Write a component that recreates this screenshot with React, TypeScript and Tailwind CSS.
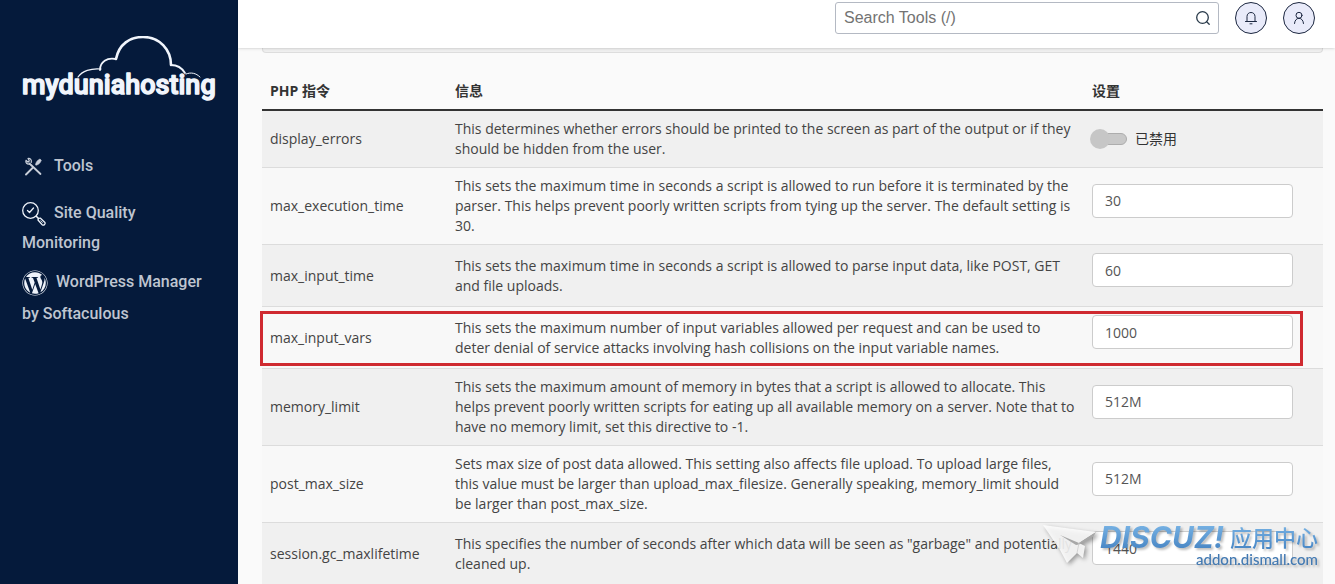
import { useState } from 'react';
import { FaWordpress } from 'react-icons/fa';

interface Directive {
  name: string;
  info: string;
  value?: string;
  marked?: boolean;
}

const directives: Directive[] = [
  {
    name: 'display_errors',
    info: 'This determines whether errors should be printed to the screen as part of the output or if they should be hidden from the user.',
  },
  {
    name: 'max_execution_time',
    info: 'This sets the maximum time in seconds a script is allowed to run before it is terminated by the parser. This helps prevent poorly written scripts from tying up the server. The default setting is 30.',
    value: '30',
  },
  {
    name: 'max_input_time',
    info: 'This sets the maximum time in seconds a script is allowed to parse input data, like POST, GET and file uploads.',
    value: '60',
  },
  {
    name: 'max_input_vars',
    info: 'This sets the maximum number of input variables allowed per request and can be used to deter denial of service attacks involving hash collisions on the input variable names.',
    value: '1000',
    marked: true,
  },
  {
    name: 'memory_limit',
    info: 'This sets the maximum amount of memory in bytes that a script is allowed to allocate. This helps prevent poorly written scripts for eating up all available memory on a server. Note that to have no memory limit, set this directive to -1.',
    value: '512M',
  },
  {
    name: 'post_max_size',
    info: 'Sets max size of post data allowed. This setting also affects file upload. To upload large files, this value must be larger than upload_max_filesize. Generally speaking, memory_limit should be larger than post_max_size.',
    value: '512M',
  },
  {
    name: 'session.gc_maxlifetime',
    info: 'This specifies the number of seconds after which data will be seen as "garbage" and potentially cleaned up.',
    value: '1440',
  },
];

// ─── Sidebar ─────────────────────────────────────────────────────────────────
function Logo() {
  return (
    <svg viewBox="0 0 194 70" className="block h-[70px] w-[194px]" role="img" aria-label="myduniahosting">
      <g fill="none" stroke="#f1f5fc" strokeLinecap="round" strokeLinejoin="round">
        <path d="M56 41c4-6 13-9 23-8" strokeWidth="1.2" />
        <path d="M78 34c0-8 7-13 16-11" strokeWidth="1.8" />
        <path d="M94 23C97 8 108 1 121 1c17 0 28 13 28 28" strokeWidth="2.6" />
        <path d="M149 29c6 0 11 3 14 8" strokeWidth="1.8" />
        <path d="M164 38c5-2 10-1 14 3" strokeWidth="1" />
      </g>
      <text
        x="0"
        y="58"
        fontSize="27"
        fill="#f1f5fc"
        stroke="#f1f5fc"
        strokeWidth="1.4"
        strokeLinejoin="round"
        className="font-['Roboto',sans-serif] font-medium"
      >
        myduniahosting
      </text>
    </svg>
  );
}

function ToolsIcon() {
  return (
    <svg viewBox="0 0 20 20" className="inline-block size-5 align-middle" fill="none" stroke="#c9cfda" strokeLinecap="round">
      <path d="M7.500 6.500 18.500 17" strokeWidth="1.800" />
      <path d="M6 1.500c2.300-.3 4 1.500 3.200 4M4 3.300c-.8 2.500 1 4.200 3.500 3.800M6 1.500l1.300 2.300-1.300 1.300L4 3.300" strokeWidth="1.200" />
      <path d="M4 17.500 11 10.500" strokeWidth="1.900" />
      <path d="M13.500 7.500c.5-2.500 2-4.500 4.500-5.500l1.300 1.200c-.8 2.500-2.500 4.300-5 5z" fill="#c9cfda" strokeWidth=".6" />
    </svg>
  );
}

function QualityIcon() {
  return (
    <svg viewBox="0 0 24 24" className="inline-block size-6 align-middle" fill="none" stroke="#eef2f9" strokeLinecap="round" strokeLinejoin="round">
      <circle cx="8.500" cy="8.500" r="7.800" strokeWidth="1.300" />
      <path d="m5.500 8.500 2 2 4-4.500" strokeWidth="1.300" />
      <path d="m14.300 14.300 2.200 2.200" strokeWidth="1.600" />
      <path d="M16 18c0-1.500 1-2 2.500-1.800l4.200 4c1.200 1.500-.8 3.700-2.500 2.500z" strokeWidth="1.300" />
      <path d="m18.800 18.800 1.600 1.600" strokeWidth=".8" />
    </svg>
  );
}

function Sidebar() {
  return (
    <aside className="w-[238px] shrink-0 bg-[#051a3b] px-[22px] pt-9 font-['Roboto',sans-serif] text-base font-medium text-[#bfc5d0]">
      <Logo />
      <nav className="mt-11 flex flex-col">
        <a href="#tools" className="block leading-8">
          <ToolsIcon />
          <span className="ml-3">Tools</span>
        </a>
        <a href="#quality" className="mt-4 block leading-[30px]">
          <QualityIcon />
          <span className="ml-2">Site Quality Monitoring</span>
        </a>
        <a href="#wordpress" className="mt-2 block leading-8">
          <FaWordpress className="inline-block size-[26px] align-middle text-[#eef2f9]" />
          <span className="ml-2">WordPress Manager by Softaculous</span>
        </a>
      </nav>
    </aside>
  );
}

// ─── Top bar ─────────────────────────────────────────────────────────────────
function TopBar() {
  return (
    <header className="relative z-10 flex h-12 items-start justify-end gap-4 bg-white pt-0.5 pr-5 shadow-sm">
      <div className="flex h-8 w-[384px] items-center rounded-[3px] border border-[#b4b9c3] bg-white pr-2">
        <input
          type="text"
          aria-label="Search Tools"
          placeholder="Search Tools (/)"
          className="min-w-0 flex-1 px-2 font-['Liberation_Sans',Arial,sans-serif] text-base text-gray-800 outline-none placeholder:text-[#737373]"
        />
        <button type="button" aria-label="Search">
          <svg viewBox="0 0 14 14" className="size-3.5" fill="none" stroke="#293a4a" strokeWidth="1.300" strokeLinecap="round">
            <circle cx="6.500" cy="6.500" r="5.800" />
            <path d="m10.700 10.700 2.500 2.500" />
          </svg>
        </button>
      </div>
      <button type="button" aria-label="Notifications" className="flex size-8 items-center justify-center rounded-full border border-[#1c2740] bg-[#e9ebfa]">
        <svg viewBox="0 0 14 14" className="size-3.5" fill="none" stroke="#1c2740" strokeWidth="1" strokeLinecap="round">
          <path d="M1.500 10.500h11M3 10.500V5.500C3 3 4.800 1.500 7 1.500s4 1.500 4 4v5M6 12.800h2" />
        </svg>
      </button>
      <button type="button" aria-label="Account" className="flex size-8 items-center justify-center rounded-full border border-[#1c2740] bg-[#e9ebfa]">
        <svg viewBox="0 0 14 14" className="size-3.5" fill="none" stroke="#1c2740" strokeWidth="1" strokeLinecap="round">
          <circle cx="7" cy="4.300" r="3" />
          <path d="M2.500 12.500c.2-2.900 1.900-5.200 4.500-5.200s4.300 2.300 4.500 5.200" />
        </svg>
      </button>
    </header>
  );
}

// ─── Directive table ─────────────────────────────────────────────────────────
function DirectiveRow({ item }: { item: Directive }) {
  const [value, setValue] = useState(item.value ?? '');
  const [enabled, setEnabled] = useState(false);

  return (
    <tr className="relative border-t border-[#dcdcdc] odd:bg-[#f0f0f0] even:bg-[#f8f8f8] first:border-t-0">
      <td className="p-2">
        <label htmlFor={item.name}>{item.name}</label>
        {item.marked && (
          <span className="pointer-events-none absolute top-[3px] right-5 bottom-[3px] -left-0.5 border-3 border-[#cf2a30]" />
        )}
      </td>
      <td className="p-2">{item.info}</td>
      <td className="py-2 pr-[30px] pl-2">
        {item.value === undefined ? (
          <div className="flex items-center gap-2">
            <input
              id={item.name}
              type="checkbox"
              checked={enabled}
              onChange={(e) => setEnabled(e.target.checked)}
              className="relative h-3 w-[35px] appearance-none rounded-full border border-[#adadad] bg-[#c8c8c8] before:absolute before:-top-[5px] before:-left-[3px] before:size-5 before:rounded-full before:bg-[#c6c6c6] checked:bg-[#8fc0e8] checked:before:left-[18px]"
            />
            <span className="text-[#333]">{enabled ? '已启用' : '已禁用'}</span>
          </div>
        ) : (
          <input
            id={item.name}
            type="text"
            value={value}
            onChange={(e) => setValue(e.target.value)}
            className="mb-[11px] block h-[34px] w-full rounded-[4px] border border-[#ccc] bg-white px-3 text-[#555] outline-none focus:border-[#66afe9]"
          />
        )}
      </td>
    </tr>
  );
}

function DirectiveTable() {
  return (
    <table className="mt-5 w-full table-fixed border-collapse text-left text-sm leading-5 text-[#444]">
      <colgroup>
        <col className="w-[185px]" />
        <col />
        <col className="w-[239px]" />
      </colgroup>
      <thead>
        <tr className="border-b-2 border-[#333] text-[#333]">
          <th className="p-2 font-bold">PHP 指令</th>
          <th className="p-2 font-bold">信息</th>
          <th className="p-2 font-bold">设置</th>
        </tr>
      </thead>
      <tbody>
        {directives.map((d) => (
          <DirectiveRow key={d.name} item={d} />
        ))}
      </tbody>
    </table>
  );
}

// ─── Watermark in the bottom right corner ────────────────────────────────────
function Watermark() {
  return (
    <div className="pointer-events-none absolute right-[17px] bottom-[17px] z-20 flex items-start">
      <svg viewBox="0 0 58 44" className="h-11 w-[58px] drop-shadow-[2px_2px_2px_rgba(0,0,0,0.4)]">
        <path d="M1 2 54 9 37 20 43 23 41 35 35 30 25 40 18 27z" fill="#fcfcfc" fillOpacity=".88" />
        <path d="M18 12 37 20 54 9 51 14 37 21.500 34 22z" fill="#a8a8a8" />
        <path d="M35 30 37 20" fill="none" stroke="#ccc" strokeWidth=".8" />
      </svg>
      <div className="flex flex-col items-end drop-shadow-[2px_2px_1px_rgba(0,0,0,0.25)]">
        <div className="flex items-center gap-0.5 bg-linear-to-b from-[#7ab5e6] to-[#4583c2] bg-clip-text text-transparent">
          <span className="pr-1 font-['Inter',sans-serif] text-[30px] leading-7 font-bold italic">DISCUZ!</span>
          <span className="text-[22px] leading-7 font-medium">应用中心</span>
        </div>
        <span className="font-['Lato',sans-serif] text-[15px] leading-4 font-medium text-[#4279b2]">addon.dismall.com</span>
      </div>
    </div>
  );
}

export default function App() {
  return (
    <div className="relative flex min-h-screen bg-[#fafafa] font-['Open_Sans','Noto_Sans_CJK_SC',sans-serif]">
      <Sidebar />
      <div className="min-w-0 flex-1">
        <TopBar />
        <main className="pr-3 pl-6">
          <div className="h-[5px] rounded-b-[4px] border border-t-0 border-[#ddd] bg-[#f0f0f0]" />
          <DirectiveTable />
        </main>
      </div>
      <Watermark />
    </div>
  );
}
